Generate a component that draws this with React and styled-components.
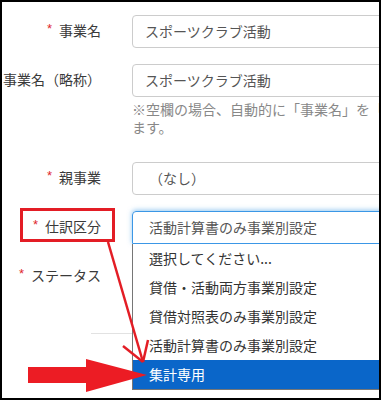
import React from 'react';
import styled, { createGlobalStyle } from 'styled-components';

const GlobalStyle = createGlobalStyle`
  html, body {
    margin: 0;
    padding: 0;
    background: #fff;
  }
  body {
    font-family: "Noto Sans CJK JP", "Noto Sans", sans-serif;
  }
`;

const Frame = styled.div`
  position: relative;
  width: 381px;
  height: 400px;
  box-sizing: border-box;
  border: 2px solid #000;
  background: #fff;
  overflow: hidden;
  padding-top: 13px;
`;

const Row = styled.div`
  display: grid;
  grid-template-columns: 99px 450px;
  column-gap: 31px;
  align-items: start;
  margin-bottom: ${(p) => p.$gap ?? 16}px;
`;

const Label = styled.div`
  height: 33px;
  line-height: 31px;
  text-align: right;
  font-size: 14px;
  color: #3a3a3a;
  white-space: nowrap;
`;

const Star = styled.span`
  color: #e0262b;
  font-family: "Liberation Sans", sans-serif;
  font-size: 13px;
  position: relative;
  top: -3px;
  margin-right: 7px;
`;

const Field = styled.div`
  position: relative;
`;

const TextBox = styled.div`
  box-sizing: border-box;
  height: 33px;
  line-height: 31px;
  padding: 0 12px;
  border: 1px solid #ccc;
  border-radius: 4px;
  font-size: 14px;
  color: #555;
  white-space: nowrap;
`;

const SelectBox = styled.div`
  box-sizing: border-box;
  height: 33px;
  line-height: 31px;
  padding: 0 16px;
  border: 1px solid ${(p) => (p.$open ? '#3b97e6' : '#ccc')};
  border-radius: ${(p) => (p.$open ? '4px 4px 0 0' : '4px')};
  box-shadow: ${(p) => (p.$open ? '0 -1px 5px rgba(102,175,233,0.7)' : 'none')};
  font-size: 14px;
  color: #555;
  white-space: nowrap;
`;

const Help = styled.div`
  margin: 3px 0 10px;
  font-size: 14px;
  line-height: 18px;
  color: #888;
`;

const List = styled.ul`
  position: absolute;
  top: 100%;
  left: 0;
  right: 0;
  margin: 0;
  padding: 0;
  list-style: none;
  background: #fff;
  border: 1px solid #767676;
  border-top: none;
  z-index: 2;
`;

const Option = styled.li`
  height: 29px;
  line-height: 29px;
  padding-left: 16px;
  font-size: 14px;
  color: ${(p) => (p.$active ? '#fff' : '#333')};
  background: ${(p) => (p.$active ? '#0a66c9' : 'transparent')};
  white-space: nowrap;
`;

const Divider = styled.div`
  margin-left: 89px;
  border-top: 1px solid #e2e2e2;
`;

const Overlay = styled.svg`
  position: absolute;
  left: -2px;
  top: -2px;
  z-index: 5;
  pointer-events: none;
`;

const options = [
  '選択してください...',
  '貸借・活動両方事業別設定',
  '貸借対照表のみ事業別設定',
  '活動計算書のみ事業別設定',
  '集計専用',
];

export default function App() {
  return (
    <>
      <GlobalStyle />
      <Frame>
        <Row>
          <Label><Star>*</Star>事業名</Label>
          <Field><TextBox>スポーツクラブ活動</TextBox></Field>
        </Row>
        <Row>
          <Label>事業名（略称）</Label>
          <Field>
            <TextBox>スポーツクラブ活動</TextBox>
            <Help>※空欄の場合、自動的に「事業名」を「事業名（略称）」として登録します。</Help>
          </Field>
        </Row>
        <Row>
          <Label><Star>*</Star>親事業</Label>
          <Field><SelectBox>（なし）</SelectBox></Field>
        </Row>
        <Row>
          <Label><Star>*</Star>仕訳区分</Label>
          <Field>
            <SelectBox $open>活動計算書のみ事業別設定</SelectBox>
            <List>
              {options.map((o, i) => (
                <Option key={o} $active={i === options.length - 1}>{o}</Option>
              ))}
            </List>
          </Field>
        </Row>
        <Row $gap={40}>
          <Label><Star>*</Star>ステータス</Label>
          <Field><SelectBox /></Field>
        </Row>
        <Divider />

        <Overlay width="381" height="400" viewBox="0 0 381 400">
          <rect x="21.5" y="209.5" width="92" height="31" fill="none" stroke="#e31d25" strokeWidth="3" />
          <line x1="108" y1="242" x2="143" y2="362" stroke="#e31d25" strokeWidth="2.5" />
          <line x1="123" y1="346" x2="143" y2="362" stroke="#e31d25" strokeWidth="2.5" />
          <line x1="148" y1="340" x2="143" y2="362" stroke="#e31d25" strokeWidth="2.5" />
          <rect x="28" y="367" width="60" height="16" fill="#ec1c24" />
          <polygon points="86,359 147,375 86,392" fill="#ec1c24" />
        </Overlay>
      </Frame>
    </>
  );
}
